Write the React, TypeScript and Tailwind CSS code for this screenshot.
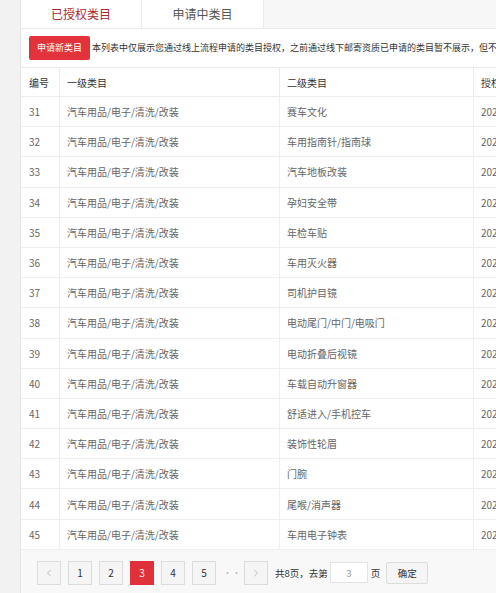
import { ChevronLeft, ChevronRight } from 'lucide-react'

const rows: [number, string][] = [
  [31, '赛车文化'],
  [32, '车用指南针/指南球'],
  [33, '汽车地板改装'],
  [34, '孕妇安全带'],
  [35, '年检车贴'],
  [36, '车用灭火器'],
  [37, '司机护目镜'],
  [38, '电动尾门/中门/电吸门'],
  [39, '电动折叠后视镜'],
  [40, '车载自动升窗器'],
  [41, '舒适进入/手机控车'],
  [42, '装饰性轮眉'],
  [43, '门腕'],
  [44, '尾喉/消声器'],
  [45, '车用电子钟表'],
]

const font = { fontFamily: '"Noto Sans CJK SC", "Noto Sans", sans-serif' }

function PageBtn({ children, active }: { children: React.ReactNode; active?: boolean }) {
  return (
    <div
      className={
        active
          ? 'w-[24px] h-[24px] flex items-center justify-center bg-[#e0303a] text-white text-[10px]'
          : 'w-[24px] h-[24px] flex items-center justify-center bg-[#f5f5f5] border border-[#dcdcdc] text-[#333] text-[10px]'
      }
    >
      {children}
    </div>
  )
}

export default function App() {
  return (
    <div className="w-[496px] h-[593px] overflow-hidden flex bg-[#f2f2f2]" style={font}>
      <div className="w-[20px] shrink-0" />
      <div className="w-[760px] shrink-0 bg-white border-l border-[#e6e6e6] flex flex-col">
        {/* tabs */}
        <div className="h-[29px] flex border-b border-[#ececec] bg-[#f7f7f7]">
          <div className="w-[121px] flex items-center justify-center bg-white border-r border-[#ececec] text-[12px] text-[#a8292e]">
            已授权类目
          </div>
          <div className="w-[122px] flex items-center justify-center bg-white border-r border-[#ececec] text-[12px] text-[#555]">
            申请中类目
          </div>
        </div>

        {/* action bar */}
        <div className="h-[39px] flex items-center pl-[8px] border-b border-[#ececec]">
          <div className="h-[24px] px-[8px] flex items-center bg-[#e2333b] rounded-[2px] text-white text-[9px]">
            申请新类目
          </div>
          <div className="ml-[2px] text-[9px] text-[#333] whitespace-nowrap">
            本列表中仅展示您通过线上流程申请的类目授权，之前通过线下邮寄资质已申请的类目暂不展示，但不影响您正常发布商品。
          </div>
        </div>

        {/* table */}
        <div className="text-[10px]">
          <div className="h-[29px] flex items-center border-b border-[#ececec] text-[#333]">
            <div className="w-[39px] h-full flex items-center pl-[8px] border-r border-[#ececec]">编号</div>
            <div className="w-[220px] h-full flex items-center pl-[7px] border-r border-[#ececec]">一级类目</div>
            <div className="w-[194px] h-full flex items-center pl-[7px] border-r border-[#ececec]">二级类目</div>
            <div className="flex-1 h-full flex items-center pl-[7px]">授权时间</div>
          </div>
          {rows.map(([no, name]) => (
            <div key={no} className="h-[30.2px] flex items-center border-b border-[#efefef] text-[#666]">
              <div className="w-[39px] h-full flex items-center pl-[8px] border-r border-[#efefef]">{no}</div>
              <div className="w-[220px] h-full flex items-center pl-[7px] border-r border-[#efefef]">
                汽车用品/电子/清洗/改装
              </div>
              <div className="w-[194px] h-full flex items-center pl-[7px] border-r border-[#efefef]">{name}</div>
              <div className="flex-1 h-full flex items-center pl-[7px]">2020-05-18 10:32:16</div>
            </div>
          ))}
        </div>

        {/* pagination */}
        <div className="flex-1 bg-[#f8f8f8] flex items-start pt-[11px] pl-[16px] text-[9.5px] text-[#333]">
          <div className="flex items-center gap-[7px]">
            <PageBtn>
              <ChevronLeft size={12} strokeWidth={1.2} className="text-[#999]" />
            </PageBtn>
            <PageBtn>1</PageBtn>
            <PageBtn>2</PageBtn>
            <PageBtn active>3</PageBtn>
            <PageBtn>4</PageBtn>
            <PageBtn>5</PageBtn>
            <div className="w-[14px] text-center text-[#bbb] text-[9px]">···</div>
            <PageBtn>
              <ChevronRight size={12} strokeWidth={1.2} className="text-[#999]" />
            </PageBtn>
            <div className="flex items-center">
              <span>共8页，去第</span>
              <div className="ml-[2px] w-[38px] h-[21px] bg-white border border-[#e3e3e3] flex items-center justify-center text-[#999]">
                3
              </div>
              <span className="ml-[3px]">页</span>
              <div className="ml-[6px] w-[42px] h-[22px] bg-[#f5f5f5] border border-[#dcdcdc] rounded-[2px] flex items-center justify-center">
                确定
              </div>
            </div>
          </div>
        </div>
      </div>
    </div>
  )
}
